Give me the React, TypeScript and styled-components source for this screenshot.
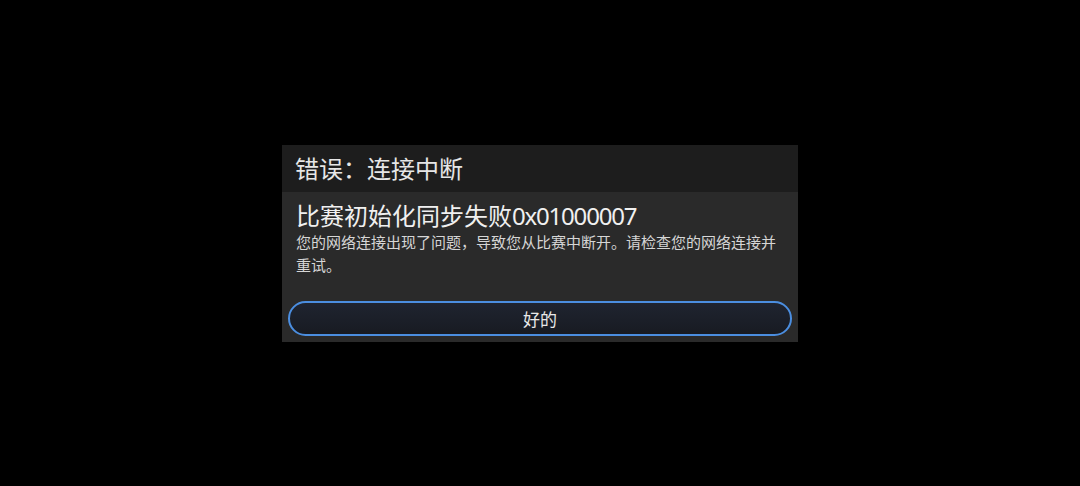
import React from "react";
import styled, { createGlobalStyle } from "styled-components";

const Global = createGlobalStyle`
  html, body { margin: 0; padding: 0; background: #000; }
  body { font-family: "Noto Sans", "Noto Sans CJK SC", sans-serif; }
`;

const Screen = styled.div`
  width: 100vw;
  height: 100vh;
  display: flex;
  align-items: center;
  justify-content: center;
  background: #000;
`;

const Dialog = styled.div`
  width: 516px;
  height: 197px;
  display: flex;
  flex-direction: column;
  background: #2a2a2a;
  font-family: "Noto Sans CJK SC", "Noto Sans", sans-serif;
`;

const Header = styled.div`
  height: 47px;
  display: flex;
  align-items: center;
  padding-left: 13px;
  background: #1d1d1d;
  color: #e6e6e6;
  font-size: 24px;
  line-height: 1;
  flex-shrink: 0;
`;

const Body = styled.div`
  flex: 1;
  display: flex;
  flex-direction: column;
  padding: 9px 6px 6px 6px;
`;

const Content = styled.div`
  padding: 0 14px 0 8px;
  flex: 1;
`;

const Heading = styled.div`
  font-size: 24px;
  line-height: 28px;
  color: #f0f0f0;
`;

const Code = styled.span`
  font-family: "Noto Sans", sans-serif;
  letter-spacing: -1.2px;
`;

const Message = styled.div`
  font-size: 15px;
  line-height: 23px;
  color: #d6d6d6;
`;

const OkButton = styled.button`
  height: 35px;
  width: 100%;
  box-sizing: border-box;
  border: 2.5px solid #4b8ee0;
  border-radius: 18px;
  background: linear-gradient(#1f2430, #181b22);
  color: #e8e8e8;
  font-family: "Noto Sans CJK SC", "Noto Sans", sans-serif;
  font-size: 17px;
  padding: 0;
  display: flex;
  align-items: center;
  justify-content: center;
`;

export default function App() {
  return (
    <>
      <Global />
      <Screen>
        <Dialog>
          <Header>错误：连接中断</Header>
          <Body>
            <Content>
              <Heading>
                比赛初始化同步失败<Code>0x01000007</Code>
              </Heading>
              <Message>
                您的网络连接出现了问题，导致您从比赛中断开。请检查您的网络连接并重试。
              </Message>
            </Content>
            <OkButton>好的</OkButton>
          </Body>
        </Dialog>
      </Screen>
    </>
  );
}
